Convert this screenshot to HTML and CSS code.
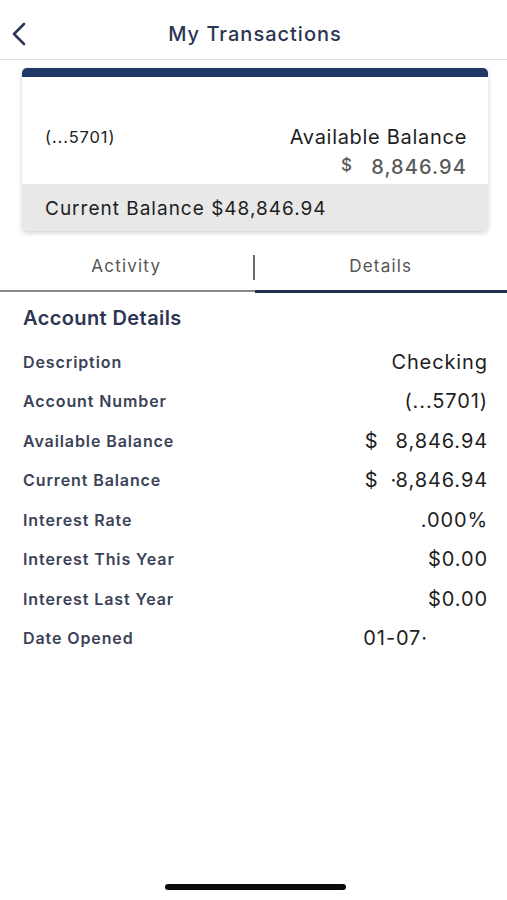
FILE: index.html
```html
<!DOCTYPE html>
<html>
<head>
<meta charset="utf-8">
<link rel="stylesheet" href="styles.css">
</head>
<body>
<div class="screen">
  <header class="topbar">
    <svg class="back" width="18" height="26" viewBox="0 0 18 26"><path d="M14 3 L4 13 L14 23" fill="none" stroke="#2c3553" stroke-width="2.6" stroke-linecap="round" stroke-linejoin="round"/></svg>
    <h1 class="title">My Transactions</h1>
  </header>

  <div class="card">
    <div class="card-top"></div>
    <div class="card-body">
      <span class="acct">(...5701)</span>
      <div class="avail">
        <div class="avail-label">Available Balance</div>
        <div class="avail-amt"><span class="cur">$</span><span>8,846.94</span></div>
      </div>
    </div>
    <div class="card-foot">Current Balance $48,846.94</div>
  </div>

  <nav class="tabs">
    <div class="tab">Activity</div>
    <div class="tab active">Details</div>
  </nav>

  <section class="details">
    <h2 class="heading">Account Details</h2>
    <div class="row"><span class="label">Description</span><span class="value">Checking</span></div>
    <div class="row"><span class="label">Account Number</span><span class="value">(...5701)</span></div>
    <div class="row"><span class="label">Available Balance</span><span class="value money"><span>$</span><span>8,846.94</span></span></div>
    <div class="row"><span class="label">Current Balance</span><span class="value money"><span>$</span><span><span class="dot">·</span>8,846.94</span></span></div>
    <div class="row"><span class="label">Interest Rate</span><span class="value">.000%</span></div>
    <div class="row"><span class="label">Interest This Year</span><span class="value">$0.00</span></div>
    <div class="row"><span class="label">Interest Last Year</span><span class="value">$0.00</span></div>
    <div class="row"><span class="label">Date Opened</span><span class="value date">01-07·</span></div>
  </section>

  <div class="home-ind"></div>
</div>
</body>
</html>
```

FILE: styles.css
```css
* { box-sizing: border-box; }
html, body { margin: 0; padding: 0; background: #fff; }
body { font-family: Inter, "Noto Sans", sans-serif; color: #222; }
.screen { width: 507px; height: 900px; position: relative; overflow: hidden; }

.topbar {
  height: 60px;
  display: flex;
  align-items: center;
  justify-content: center;
  border-bottom: 1px solid #e2e2e4;
  position: relative;
  padding-top: 8px;
}
.back { position: absolute; left: 10px; top: 21px; }
.title {
  margin: 0;
  font-size: 20px;
  font-weight: 500;
  color: #2c3553;
  letter-spacing: 1px;
  padding-left: 3px;
}

.card {
  margin: 8px 19px 0 22px;
  border-radius: 5px;
  overflow: hidden;
  box-shadow: 0 2px 5px rgba(0,0,0,0.18);
  background: #fff;
}
.card-top { height: 9px; background: #1f3868; }
.card-body {
  height: 107px;
  display: flex;
  justify-content: space-between;
  align-items: flex-start;
  padding: 48px 21px 0 23px;
}
.acct { font-size: 16.5px; color: #222; margin-top: 2px; letter-spacing: 0.9px; }
.avail { text-align: right; }
.avail-label { font-size: 20px; color: #1e1e1e; letter-spacing: 0.7px; }
.avail-amt {
  display: flex;
  justify-content: flex-end;
  gap: 18px;
  font-size: 20px;
  font-weight: 500;
  color: #5a5a5a;
  margin-top: 6px;
  letter-spacing: 1.1px;
}
.avail-amt .cur { font-size: 17px; }
.card-foot {
  height: 47px;
  background: #e8e8e8;
  display: flex;
  align-items: center;
  padding-left: 23px;
  font-size: 19px;
  color: #1e1e1e;
  letter-spacing: 1px;
  padding-top: 2px;
}

.tabs {
  display: flex;
  margin-top: 21px;
  height: 40px;
  border-bottom: 2px solid #8a8a8a;
  position: relative;
}
.tab {
  flex: 1;
  display: flex;
  justify-content: center;
  align-items: flex-start;
  padding-top: 4px;
  font-size: 17px;
  color: #555;
  letter-spacing: 1.2px;
}
.tab:first-child { border-right: 2px solid #6a6a6a; height: 25px; padding-top: 1px; margin-top: 3px; }
.tab.active {
  position: relative;
}
.tab.active::after {
  content: "";
  position: absolute;
  left: 0; right: 0; bottom: -3px;
  height: 3px;
  background: #1f3050;
}

.details { padding: 14px 19px 0 23px; }
.heading {
  margin: 0 0 12px;
  font-size: 20px;
  font-weight: 600;
  color: #2c3553;
  letter-spacing: 0.4px;
}
.row {
  display: flex;
  justify-content: space-between;
  align-items: center;
  height: 39.5px;
}
.label {
  font-size: 16px;
  font-weight: 600;
  color: #3c4257;
  letter-spacing: 0.9px;
}
.value { font-size: 20px; color: #1e1e1e; letter-spacing: 0.9px; }
.value.money { display: flex; gap: 17px; }
.dot { display: inline-block; width: 0; margin-left: -5px; margin-right: 5px; }
.value.date { margin-right: 60px; }

.home-ind {
  position: absolute;
  left: 165px;
  top: 884px;
  width: 181px;
  height: 6px;
  border-radius: 3px;
  background: #0b0b0b;
}
```
